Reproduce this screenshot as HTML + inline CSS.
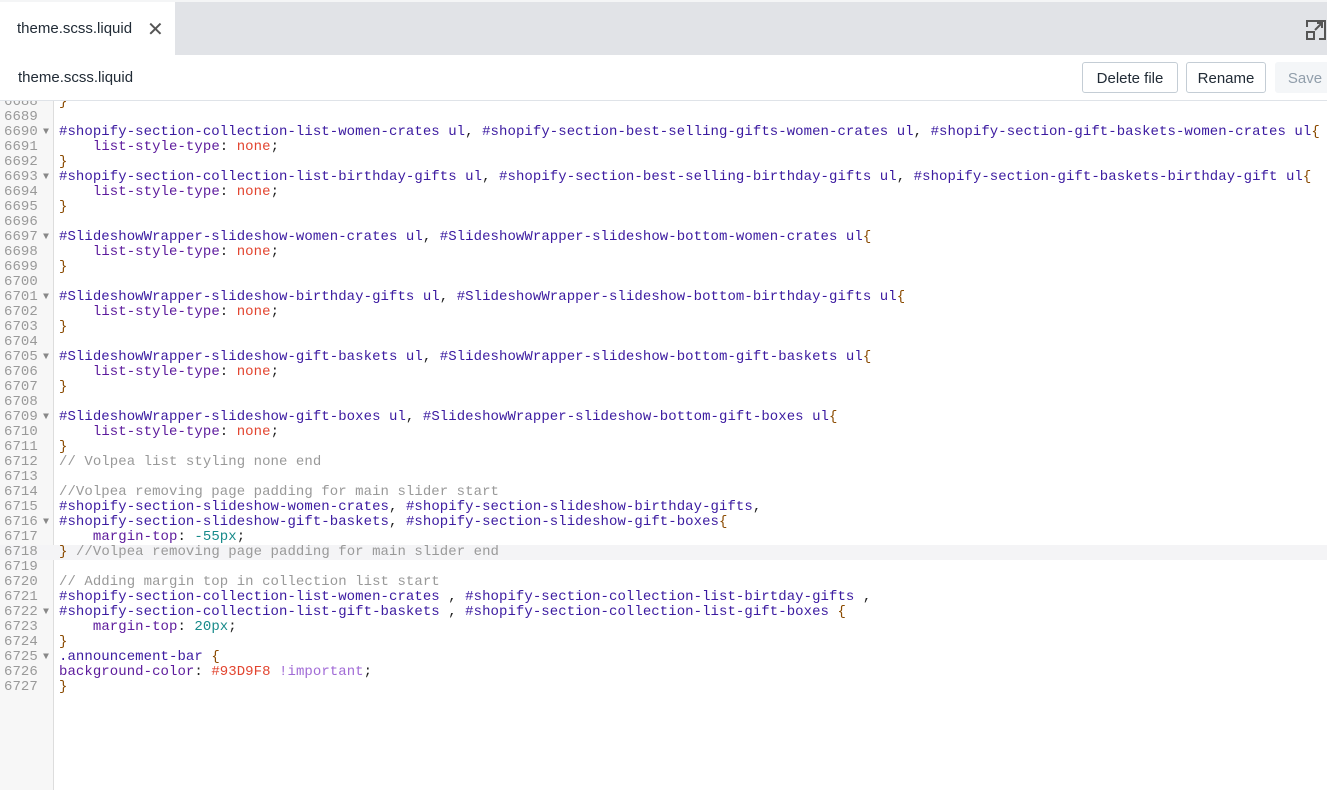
<!DOCTYPE html>
<html><head><style>
*{margin:0;padding:0;box-sizing:border-box}
body{width:1327px;height:790px;overflow:hidden;background:#fff;font-family:"Liberation Sans",sans-serif;position:relative}
.tabbar{position:absolute;left:0;top:0;width:1327px;height:55px;background:#e1e3e7;border-top:2px solid #f4f5f6}
.tab{position:absolute;left:0;top:0;width:175px;height:55px;background:#fff;font-size:15px;color:#212b36;padding:18px 0 0 17px}
.tab .x{position:absolute;left:147px;top:15px;font-size:20px;color:#555}
.exp{position:absolute;left:1305px;top:16px;width:22px;height:24px}
.hdr{position:absolute;left:0;top:55px;width:1327px;height:46px;background:#fff;border-bottom:1px solid #dfe3e8}
.hdr .t{position:absolute;left:18px;top:14px;font-size:15px;color:#212b36}
.btn{position:absolute;top:7px;height:31px;border:1px solid #c4cdd5;border-radius:3px;font-size:15px;color:#212b36;padding:7px 0 0;text-align:center;background:#fff}
.code{position:absolute;left:0;top:101px;width:1327px;height:689px;overflow:hidden}
.gut{position:absolute;left:0;top:0;width:54px;height:689px;background:#f7f7f7;border-right:1px solid #ddd}
.lines{position:absolute;left:0;top:-6.5px;width:1327px;font-family:"Liberation Mono",monospace;font-size:14px;line-height:15px;letter-spacing:0.06px}
.ln{position:relative;height:15px;display:block}
.ln .n{position:absolute;left:4px;width:36px;color:#999;text-align:left}
.ln .f{position:absolute;left:43px;color:#888;font-size:10px}
.ln .c{position:absolute;left:59px;color:#222;white-space:pre}
.hl{background:#f4f4f6}
.ln .s{color:#3b1aa0}.ln .p{color:#5c1a9c}.ln .v{color:#e2442f}.ln .m{color:#999}.ln .u{color:#178a8a}.ln .b{color:#8a4a00}.ln .k{color:#a16bd6}
</style></head><body>
<div class="tabbar"><div class="tab">theme.scss.liquid<span class="x">✕</span></div>
<svg class="exp" viewBox="0 0 22 24" fill="none" stroke="#555" stroke-width="2"><path d="M2 9V3h18v18h-6"/><rect x="2" y="14" width="7" height="7"/><path d="M10 12l7-7M12 5h5v5"/></svg></div>
<div class="hdr"><span class="t">theme.scss.liquid</span>
<div class="btn" style="left:1082px;width:96px">Delete file</div>
<div class="btn" style="left:1186px;width:80px">Rename</div>
<div class="btn" style="left:1275px;width:60px;background:#f4f6f8;border-color:#f4f6f8;color:#919eab">Save</div></div>
<div class="code"><div class="gut"></div><div class="lines"><div class="ln"><span class="n">6688</span><span class="c b">}</span></div><div class="ln"><span class="n">6689</span></div><div class="ln"><span class="n">6690</span><span class="f">▼</span><span class="c"><span class="s">#shopify-section-collection-list-women-crates ul</span>, <span class="s">#shopify-section-best-selling-gifts-women-crates ul</span>, <span class="s">#shopify-section-gift-baskets-women-crates ul</span><span class="b">{</span></span></div><div class="ln"><span class="n">6691</span><span class="c">    <span class="p">list-style-type</span>: <span class="v">none</span>;</span></div><div class="ln"><span class="n">6692</span><span class="c b">}</span></div><div class="ln"><span class="n">6693</span><span class="f">▼</span><span class="c"><span class="s">#shopify-section-collection-list-birthday-gifts ul</span>, <span class="s">#shopify-section-best-selling-birthday-gifts ul</span>, <span class="s">#shopify-section-gift-baskets-birthday-gift ul</span><span class="b">{</span></span></div><div class="ln"><span class="n">6694</span><span class="c">    <span class="p">list-style-type</span>: <span class="v">none</span>;</span></div><div class="ln"><span class="n">6695</span><span class="c b">}</span></div><div class="ln"><span class="n">6696</span></div><div class="ln"><span class="n">6697</span><span class="f">▼</span><span class="c"><span class="s">#SlideshowWrapper-slideshow-women-crates ul</span>, <span class="s">#SlideshowWrapper-slideshow-bottom-women-crates ul</span><span class="b">{</span></span></div><div class="ln"><span class="n">6698</span><span class="c">    <span class="p">list-style-type</span>: <span class="v">none</span>;</span></div><div class="ln"><span class="n">6699</span><span class="c b">}</span></div><div class="ln"><span class="n">6700</span></div><div class="ln"><span class="n">6701</span><span class="f">▼</span><span class="c"><span class="s">#SlideshowWrapper-slideshow-birthday-gifts ul</span>, <span class="s">#SlideshowWrapper-slideshow-bottom-birthday-gifts ul</span><span class="b">{</span></span></div><div class="ln"><span class="n">6702</span><span class="c">    <span class="p">list-style-type</span>: <span class="v">none</span>;</span></div><div class="ln"><span class="n">6703</span><span class="c b">}</span></div><div class="ln"><span class="n">6704</span></div><div class="ln"><span class="n">6705</span><span class="f">▼</span><span class="c"><span class="s">#SlideshowWrapper-slideshow-gift-baskets ul</span>, <span class="s">#SlideshowWrapper-slideshow-bottom-gift-baskets ul</span><span class="b">{</span></span></div><div class="ln"><span class="n">6706</span><span class="c">    <span class="p">list-style-type</span>: <span class="v">none</span>;</span></div><div class="ln"><span class="n">6707</span><span class="c b">}</span></div><div class="ln"><span class="n">6708</span></div><div class="ln"><span class="n">6709</span><span class="f">▼</span><span class="c"><span class="s">#SlideshowWrapper-slideshow-gift-boxes ul</span>, <span class="s">#SlideshowWrapper-slideshow-bottom-gift-boxes ul</span><span class="b">{</span></span></div><div class="ln"><span class="n">6710</span><span class="c">    <span class="p">list-style-type</span>: <span class="v">none</span>;</span></div><div class="ln"><span class="n">6711</span><span class="c b">}</span></div><div class="ln"><span class="n">6712</span><span class="c m">// Volpea list styling none end</span></div><div class="ln"><span class="n">6713</span></div><div class="ln"><span class="n">6714</span><span class="c m">//Volpea removing page padding for main slider start</span></div><div class="ln"><span class="n">6715</span><span class="c"><span class="s">#shopify-section-slideshow-women-crates</span>, <span class="s">#shopify-section-slideshow-birthday-gifts</span>,</span></div><div class="ln"><span class="n">6716</span><span class="f">▼</span><span class="c"><span class="s">#shopify-section-slideshow-gift-baskets</span>, <span class="s">#shopify-section-slideshow-gift-boxes</span><span class="b">{</span></span></div><div class="ln"><span class="n">6717</span><span class="c">    <span class="p">margin-top</span>: <span class="u">-55px</span>;</span></div><div class="ln hl"><span class="n">6718</span><span class="c"><span class="b">}</span> <span class="m">//Volpea removing page padding for main slider end</span></span></div><div class="ln"><span class="n">6719</span></div><div class="ln"><span class="n">6720</span><span class="c m">// Adding margin top in collection list start</span></div><div class="ln"><span class="n">6721</span><span class="c"><span class="s">#shopify-section-collection-list-women-crates</span> , <span class="s">#shopify-section-collection-list-birtday-gifts</span> ,</span></div><div class="ln"><span class="n">6722</span><span class="f">▼</span><span class="c"><span class="s">#shopify-section-collection-list-gift-baskets</span> , <span class="s">#shopify-section-collection-list-gift-boxes</span> <span class="b">{</span></span></div><div class="ln"><span class="n">6723</span><span class="c">    <span class="p">margin-top</span>: <span class="u">20px</span>;</span></div><div class="ln"><span class="n">6724</span><span class="c b">}</span></div><div class="ln"><span class="n">6725</span><span class="f">▼</span><span class="c"><span class="s">.announcement-bar</span> <span class="b">{</span></span></div><div class="ln"><span class="n">6726</span><span class="c"><span class="p">background-color</span>: <span class="v">#93D9F8</span> <span class="k">!important</span>;</span></div><div class="ln"><span class="n">6727</span><span class="c b">}</span></div></div></div>
</body></html>
